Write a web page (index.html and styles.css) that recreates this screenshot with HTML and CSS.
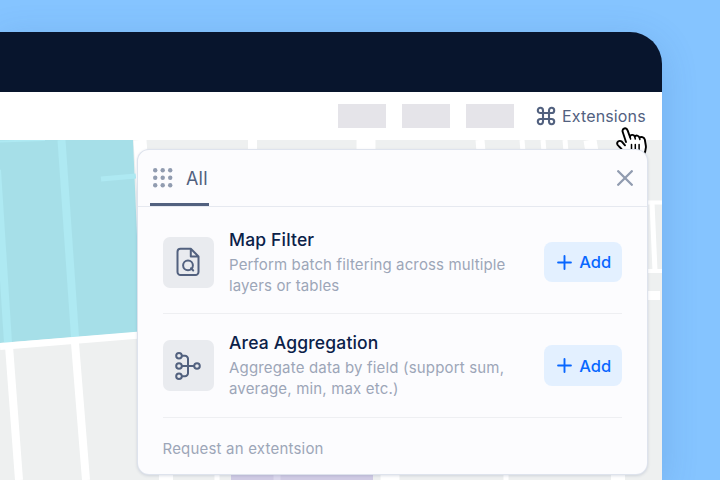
FILE: index.html
```
<!DOCTYPE html>
<html lang="en">
<head>
<meta charset="utf-8">
<title>Extensions</title>
<link rel="stylesheet" href="styles.css">
</head>
<body>
<main class="window">
  <header class="titlebar"></header>
  <nav class="toolbar">
    <span class="placeholder"></span>
    <span class="placeholder"></span>
    <span class="placeholder"></span>
    <button class="extensions">
      <svg width="20" height="20" viewBox="0 0 20 20" fill="none" stroke="currentColor" stroke-width="2.1"><path d="M7 7H4.400a2.600 2.600 0 1 1 2.600-2.600V15.600a2.600 2.600 0 1 1-2.600-2.600H15.600a2.600 2.600 0 1 1-2.600 2.600V4.400a2.600 2.600 0 1 1 2.600 2.600H7"/></svg>
      <span class="extensions-label">Extensions</span>
    </button>
  </nav>
  <section class="map">
    <svg class="map-art" width="662" height="340" viewBox="0 0 662 340">
      <rect width="662" height="340" fill="#eef0f0"/>
      <path d="M0 0H133L141 192L0 203Z" fill="#a6dfe8"/>
      <g stroke="#aee9f2" fill="none">
        <path d="M61.500 0L75 197" stroke-width="8"/>
        <path d="M-3 30L8 203" stroke-width="8"/>
        <path d="M101 39L136 36" stroke-width="5"/>
        <path d="M0 1.500L45 0" stroke-width="2"/>
      </g>
      <g stroke="#fff" fill="none">
        <path d="M0 206.500L140 195" stroke-width="7"/>
        <path d="M9 206L19 340M75 203L86 340" stroke-width="8"/>
        <path d="M140 0L144 60" stroke-width="13"/>
        <path d="M252.500 0V12M480 0L481 12" stroke-width="9"/>
        <path d="M366 0V12" stroke-width="19"/>
        <path d="M522 0L523 12M543 0L544 12M565 0L566 12" stroke-width="5"/>
        <path d="M590 0L592 12" stroke-width="13"/>
        <path d="M645 62.500H662M645 131H662" stroke-width="4"/>
        <path d="M652 62L655 131" stroke-width="5"/>
        <path d="M645 155.500H660" stroke-width="9"/>
        <path d="M217 330V340M506 330V340" stroke-width="5"/>
        <path d="M166 330V340M618 330V340" stroke-width="14"/>
        <path d="M390 330V340" stroke-width="19"/>
      </g>
      <path d="M231 330H373V340H231Z" fill="#d0cbe4"/>
      <path d="M277 330V340" stroke="#dcd9ed" stroke-width="7"/>
    </svg>
  </section>
  <svg class="cursor" width="34" height="34" viewBox="0 0 34 34">
    <path d="M10 17L6.800 7.300C5.500 3.300 10.300 1.700 11.700 5.600L14 12C14.300 9.300 17.800 9.200 18.800 11.700C19.800 9.900 22.800 10.300 23.500 12.700C25 11.200 28 12 28.800 14.500L29.800 20.500C30.300 24 29 28 27 31H10L6.200 25C4.500 22.300 3 21.700 1.700 20C-.1 17 3.200 14.800 5.800 16.600L9 20.300" fill="#fff" stroke="#000" stroke-width="1.900" stroke-linejoin="round" stroke-linecap="round"/>
    <path d="M14 12L14.600 14M18.800 12L19.300 14M23.500 13L23.900 14.500M15.500 19.500V28M19.300 19.500V28M23.100 19.500V28" fill="none" stroke="#000" stroke-width="1.500" stroke-linecap="round"/>
  </svg>
  <section class="panel">
    <header class="tabs">
      <div class="tab">
        <svg width="20" height="20" viewBox="0 0 20 20" fill="#919cb0"><circle cx="2.200" cy="2.200" r="2.200"/><circle cx="9.700" cy="2.200" r="2.200"/><circle cx="17.200" cy="2.200" r="2.200"/><circle cx="2.200" cy="9.700" r="2.200"/><circle cx="9.700" cy="9.700" r="2.200"/><circle cx="17.200" cy="9.700" r="2.200"/><circle cx="2.200" cy="17.200" r="2.200"/><circle cx="9.700" cy="17.200" r="2.200"/><circle cx="17.200" cy="17.200" r="2.200"/></svg>
        <span class="tab-label">All</span>
      </div>
      <svg width="16" height="16" viewBox="0 0 16 16" fill="none" stroke="#919cb0" stroke-width="2.300" stroke-linecap="round"><path d="M1.200 1.200L14.800 14.800M14.800 1.200L1.200 14.800"/></svg>
    </header>
    <div class="list">
      <article class="item">
        <div class="tile">
          <svg width="24" height="30" viewBox="0 0 24 30" fill="none" stroke="#52617f" stroke-width="2" stroke-linejoin="round" stroke-linecap="round"><path d="M14.800 1.800H4.500a3 3 0 0 0-3 3V25a3 3 0 0 0 3 3H19.500a3 3 0 0 0 3-3V9.500ZM14.800 1.800V9.500H22.500"/><circle cx="12" cy="18.300" r="4.900"/><path d="M15 21.300L17.200 23.500"/></svg>
        </div>
        <div class="copy">
          <h2 class="name">Map Filter</h2>
          <p class="about">Perform batch filtering across multiple<br>layers or tables</p>
        </div>
        <button class="add"><svg width="15" height="15" viewBox="0 0 14 14" stroke="currentColor" stroke-width="1.800" stroke-linecap="round"><path d="M7 1V13M1 7H13"/></svg><span class="add-label">Add</span></button>
      </article>
      <article class="item">
        <div class="tile">
          <svg width="26" height="28" viewBox="0 0 26 28" fill="none" stroke="#52617f" stroke-width="2"><circle cx="4" cy="3.800" r="2.800"/><circle cx="4" cy="14" r="2.800"/><circle cx="4" cy="24.200" r="2.800"/><circle cx="22" cy="14" r="2.800"/><path d="M6.800 3.800H10a3 3 0 0 1 3 3V21.200a3 3 0 0 1-3 3H6.800M6.800 14H19.200"/></svg>
        </div>
        <div class="copy">
          <h2 class="name">Area Aggregation</h2>
          <p class="about">Aggregate data by field (support sum,<br>average, min, max etc.)</p>
        </div>
        <button class="add"><svg width="15" height="15" viewBox="0 0 14 14" stroke="currentColor" stroke-width="1.800" stroke-linecap="round"><path d="M7 1V13M1 7H13"/></svg><span class="add-label">Add</span></button>
      </article>
      <a class="request">Request an extentsion</a>
    </div>
  </section>
</main>
</body>
</html>
```
FILE: styles.css
```
* { box-sizing: border-box; }
body {
  margin: 0;
  width: 720px;
  height: 480px;
  padding-top: 32px;
  overflow: hidden;
  background: #85c4ff;
  font-family: Inter, "Liberation Sans", sans-serif;
}
button { border: 0; padding: 0; background: none; font: inherit; }
svg { display: block; flex: none; }
.window {
  position: relative;
  width: 662px;
  height: 448px;
  border-radius: 0 32px 0 0;
  box-shadow: 0 8px 36px rgba(45, 95, 165, .2);
}
.titlebar { height: 60px; background: #08152d; border-radius: 0 32px 0 0; }
.toolbar {
  display: flex;
  align-items: center;
  gap: 16px;
  height: 48px;
  padding-right: 16px;
  justify-content: flex-end;
  background: #fff;
}
.placeholder { width: 48px; height: 24px; background: #e5e4e9; }
.extensions {
  display: flex;
  align-items: center;
  gap: 6px;
  width: 110px;
  margin-left: 6px;
  color: #52617f;
}
.extensions-label { margin-top: -1px; font-size: 16px; line-height: 24px; letter-spacing: .14px; white-space: nowrap; }
.map { height: 340px; overflow: hidden; }
.cursor { position: absolute; left: 616px; top: 93px; }
.panel {
  position: absolute;
  left: 136.5px;
  top: 117px;
  width: 511px;
  height: 325.5px;
  border: 1px solid rgba(210, 217, 229, .7);
  border-radius: 12px;
  background: #fcfcfe;
  box-shadow: 0 1px 3px rgba(50, 70, 110, .16);
  overflow: hidden;
}
.tabs {
  display: flex;
  justify-content: space-between;
  align-items: center;
  height: 57px;
  padding: 0 14px 0 12.5px;
  border-bottom: 1px solid #e6e9f0;
}
.tab {
  display: flex;
  align-items: center;
  gap: 13px;
  width: 59px;
  height: 56px;
  padding: 2px 0 0 3px;
  border-bottom: 3px solid #52617f;
}
.tab-label { position: relative; top: .5px; font-size: 18px; letter-spacing: .2px; color: #52617f; }
.list { padding: 0 25px; }
.item {
  display: flex;
  height: 103.5px;
  padding-top: 22px;
  border-bottom: 1.5px solid #eeeff2;
}
.item:first-child { height: 107px; }
.tile {
  display: flex;
  align-items: center;
  justify-content: center;
  width: 51px;
  height: 51px;
  margin-top: 7.5px;
  border-radius: 7px;
  background: #e9ebef;
}
.item:not(:first-child) .tile { margin-top: 4px; }
.copy { flex: 1; margin-left: 15.5px; white-space: nowrap; }
.name { margin: 0; font-size: 17.5px; line-height: 21.5px; letter-spacing: .17px; font-weight: 500; color: #0b2149; }
.about { margin: 4.5px 0 0; font-size: 15px; line-height: 20.6px; letter-spacing: .13px; color: #9ca6b8; }
.item:not(:first-child) .copy { margin-top: -4px; }
.item:not(:first-child) .about { letter-spacing: .17px; }
.add {
  display: flex;
  align-items: center;
  justify-content: center;
  gap: 7.5px;
  width: 78px;
  height: 40.5px;
  padding: 1px 0 0 3px;
  margin-top: 12.5px;
  border-radius: 8px;
  background: #e3f0ff;
  color: #0967ff;
}
.item:not(:first-child) .add { margin-top: 9px; }
.add-label { font-size: 16.5px; font-weight: 500; }
.request { display: block; margin-top: 20px; font-size: 15px; line-height: 22px; letter-spacing: .2px; color: #9ca6b8; }
```
